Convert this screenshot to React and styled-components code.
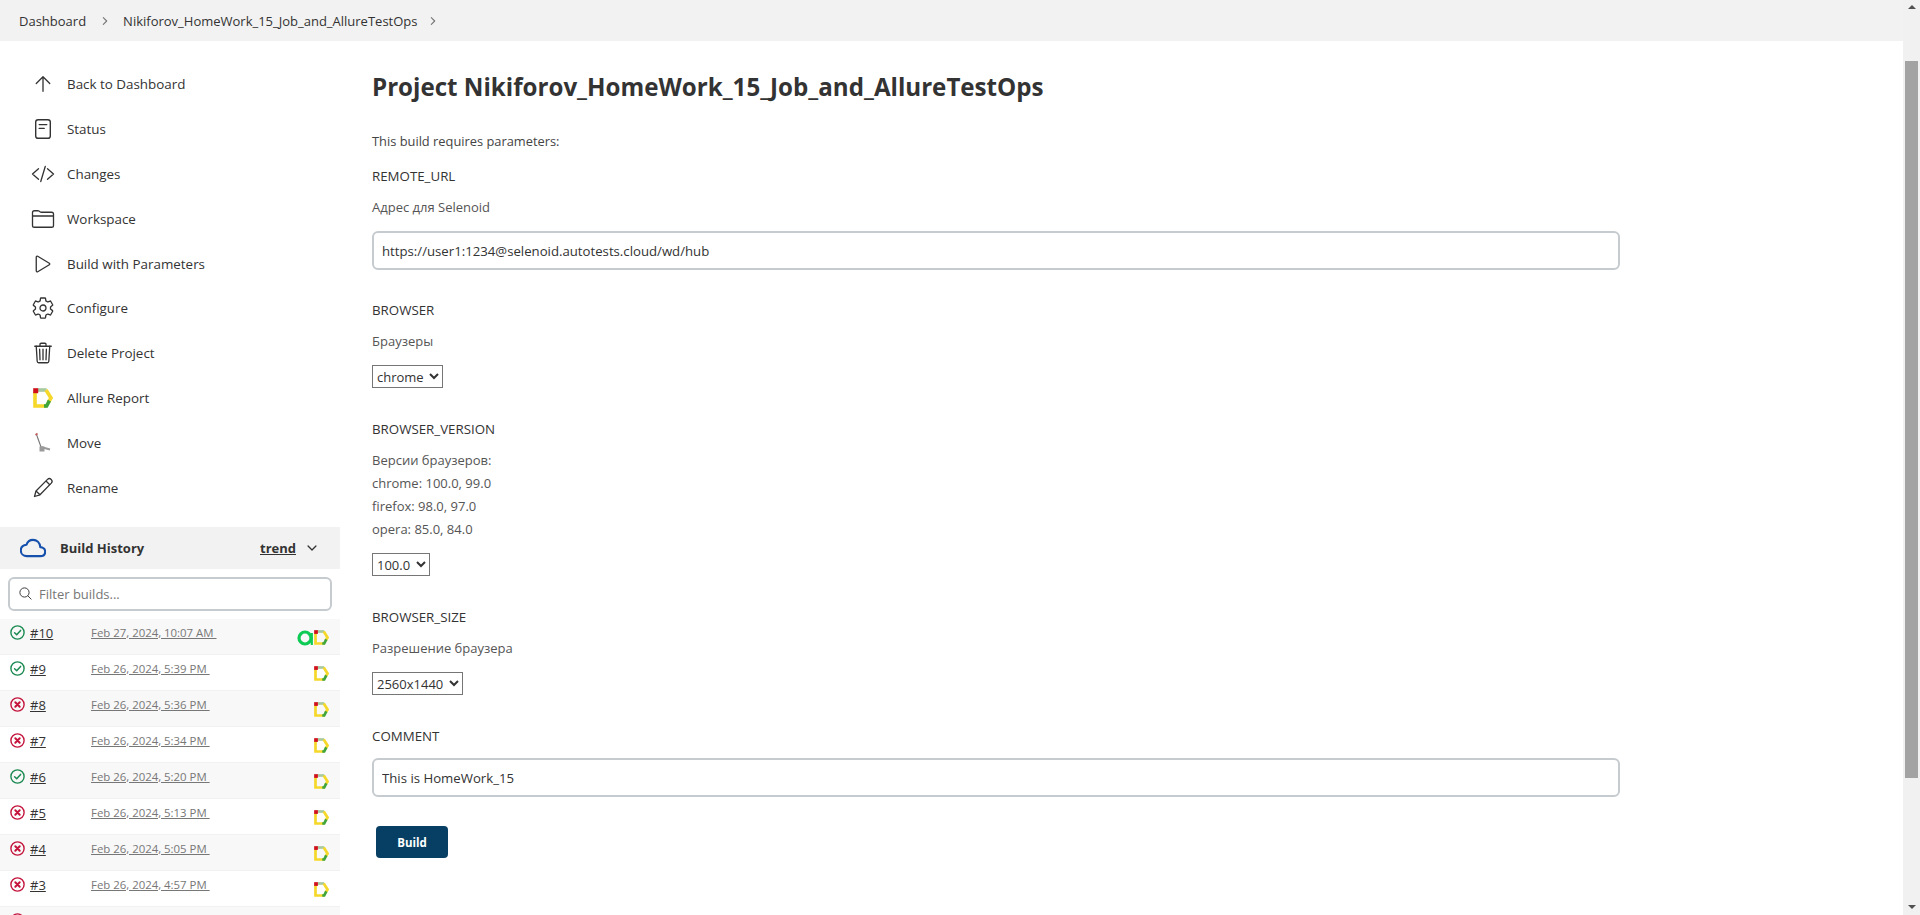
import React from 'react';
import styled, { createGlobalStyle } from 'styled-components';
import {
  IoArrowUpOutline, IoCodeSlashOutline, IoFolderOutline, IoPlayOutline,
  IoSettingsOutline, IoTrashOutline, IoCloudOutline, IoSearchOutline,
  IoChevronDownOutline, IoChevronForwardOutline,
} from 'react-icons/io5';

const FONT = '"Open Sans", "Noto Sans", sans-serif';

const Global = createGlobalStyle`
  html, body { margin: 0; padding: 0; height: 100%; overflow: hidden; background: #fff; }
  body { font-family: ${FONT}; font-size: 13px; color: #333; }
  * { box-sizing: border-box; }
`;

const Shell = styled.div`display: flex; height: 915px; overflow: hidden;`;
const Page = styled.div`flex: 1; min-width: 0; display: flex; flex-direction: column;`;
const Crumbs = styled.nav`height: 41px; flex: none; background: #f2f2f2; display: flex; align-items: center; padding-left: 19px; font-size: 13px; color: #333;`;
const Crumb = styled.span`white-space: nowrap;`;
const CrumbSep = styled.span`display: flex; width: ${p => p.$w}px; justify-content: center; color: #777; font-size: 12px;`;
const Body = styled.div`flex: 1; display: flex; min-height: 0;`;

const Sidebar = styled.aside`width: 340px; flex: none; padding-top: 20.5px;`;
const Tasks = styled.ul`list-style: none; margin: 0 0 16.5px; padding: 0 0 0 31px;`;
const Task = styled.li`height: 44.9px; display: flex; align-items: center; gap: 12px; color: #333; font-size: 13.4px;`;
const TaskIcon = styled.span`
  width: 24px; height: 24px; flex: none; display: flex; align-items: center; justify-content: center; font-size: 24px; color: #333;
  & .ionicon path, & svg[stroke='currentColor'] path { stroke-width: 28px; }
`;

const HistoryHead = styled.div`height: 42px; background: #f2f2f2; display: flex; align-items: center; padding: 0 21px 0 20px; font-weight: 700; font-size: 13px;`;
const CloudIcon = styled.span`display: flex; font-size: 26px; color: #1650ad; margin-right: 14px; & path { stroke-width: 42px; }`;
const Grow = styled.span`flex: 1;`;
const Trend = styled.span`text-decoration: underline; margin-right: 9px;`;
const Chevron = styled.span`display: flex; font-size: 14px;`;
const FilterWrap = styled.div`padding: 8px; height: 50px;`;
const Filter = styled.div`height: 34px; border: 2px solid #c6cbcf; border-radius: 6px; display: flex; align-items: center; padding-left: 8px; gap: 6px; color: #777; font-size: 13px;`;
const SearchIcon = styled.span`display: flex; font-size: 15px; color: #333;`;

const Rows = styled.div`display: flex; flex-direction: column;`;
const Row = styled.div`
  height: 36px; flex: none; display: flex; align-items: flex-start; position: relative; padding: 6px 10px 0;
  background: ${p => (p.$odd ? '#f8f8f8' : '#fff')};
  border-bottom: 1px solid #f1f1f1;
`;
const StatusSlot = styled.span`width: 15px; height: 15px; flex: none; display: flex;`;
const BuildLink = styled.span`width: 66px; padding-left: 5px; flex: none; font-size: 13px; line-height: 16px; text-decoration: underline; color: #333;`;
const BuildDate = styled.span`font-size: 11.4px; line-height: 16px; text-decoration: underline; color: #777; white-space: pre;`;
const Badges = styled.span`margin-left: auto; margin-top: 5px; margin-right: 1px; display: flex; align-items: center;`;

const Main = styled.main`flex: 1; min-width: 0; padding: 30px 0 0 32px;`;
const Title = styled.h1`margin: 0 0 28px; font-size: 24.15px; line-height: 32px; font-weight: 700; color: #333;`;
const Lead = styled.p`margin: 0 0 15px; font-size: 12.85px; line-height: 20px; color: #444;`;
const Field = styled.section`margin-bottom: ${p => p.$gap ?? 31}px;`;
const Label = styled.div`font-size: 13.3px; line-height: 20px; color: #333; margin-bottom: ${p => p.$tight ? 12 : 10}px;`;
const Desc = styled.div`font-size: 13px; line-height: 23px; color: #555; margin-bottom: 12px;`;
const TextInput = styled.input`
  display: block; width: 1248px; height: 39px; border: 2px solid #c6cbcf; border-radius: 6px; padding: 0 8px;
  font: 13.2px ${FONT}; color: #333; background: #fff; outline: none;
`;
const Select = styled.select`
  display: block; height: 23px; font: 13px ${FONT}; color: #333; background: #fff; border: 1px solid #767676; border-radius: 0; padding: 0;
  width: ${p => p.$w}px;
`;
const BuildButton = styled.button`
  display: block; width: 72px; height: 32px; margin-left: 4px; border: 0; border-radius: 4px; background: #063f63; color: #fff;
  font: 700 11.5px ${FONT};
`;

const Scrollbar = styled.div`width: 17px; flex: none; background: #f1f1f1; display: flex; flex-direction: column; align-items: center; padding: 5px 0 6px;`;
const ArrowUp = styled.span`width: 0; height: 0; border-left: 4px solid transparent; border-right: 4px solid transparent; border-bottom: 4px solid #505050;`;
const ArrowDown = styled.span`width: 0; height: 0; margin-top: auto; border-left: 4px solid transparent; border-right: 4px solid transparent; border-top: 4px solid #505050;`;
const Thumb = styled.div`width: 13px; height: 717px; margin-top: 52px; background: #a3a3a3;`;

function AllureIcon({ size = 20 }) {
  return (
    <svg width={size} height={size} viewBox="0 0 20 20" fill="none" strokeWidth="3.6">
      <path d="M5 2H13.6" stroke="#a9c9a0" />
      <path d="M13 2L18 10L15.5 14" stroke="#f5d829" />
      <path d="M2 4V18H13.5" stroke="#f5d829" />
      <path d="M16.4 12.6L13.6 18H11" stroke="#3fa53a" />
      <rect x="0.2" y="0.2" width="5" height="5" fill="#d0101c" />
    </svg>
  );
}

function MoveIcon() {
  return (
    <svg width="20" height="22" viewBox="0 0 20 22" fill="none">
      <path d="M3.5 2.5L8 15" stroke="#777" strokeWidth="1.1" />
      <path d="M2.5 3L4.5 1.5" stroke="#c25a5a" strokeWidth="1.6" />
      <path d="M8 15L17 17.5" stroke="#9a9a9a" strokeWidth="2" />
      <rect x="6.5" y="14.5" width="5" height="5" fill="#9a9a9a" />
    </svg>
  );
}

function StatusDoc() {
  return (
    <svg width="24" height="24" viewBox="0 0 24 24" fill="none" stroke="#333" strokeWidth="1.4" strokeLinecap="round">
      <rect x="4.7" y="2.7" width="14.6" height="18.6" rx="2.4" />
      <path d="M8.2 7.6H15.8M8.2 11.4H13.2" />
    </svg>
  );
}

function PencilIcon() {
  return (
    <svg width="24" height="24" viewBox="0 0 24 24" fill="none" stroke="#333" strokeWidth="1.3" strokeLinejoin="round">
      <path d="M3.5 20.5L5 15L16.5 3.4C17.6 2.3 19.1 2.4 20.2 3.4C21.3 4.5 21.3 6 20.3 7.1L9 18.8Z" />
      <path d="M5 15L9 18.8M15 5L19 9" />
    </svg>
  );
}

function AIcon() {
  return (
    <svg width="17" height="16" viewBox="0 0 17 16" fill="none">
      <circle cx="8" cy="8" r="6" stroke="#0ecb55" strokeWidth="3.2" />
      <path d="M14.8 3V15" stroke="#0ecb55" strokeWidth="2.2" />
    </svg>
  );
}

function StatusIcon({ ok }) {
  const c = ok ? '#1c8a52' : '#c4143c';
  return (
    <svg width="15" height="15" viewBox="0 0 15 15" fill="none">
      <circle cx="7.5" cy="7.5" r="6.6" stroke={c} strokeWidth="1.4" />
      {ok
        ? <path d="M4.6 7.7L6.7 9.7L10.6 5.4" stroke={c} strokeWidth="1.5" strokeLinecap="round" strokeLinejoin="round" />
        : <path d="M5.3 5.3L9.7 9.7M9.7 5.3L5.3 9.7" stroke={c} strokeWidth="2" strokeLinecap="round" />}
    </svg>
  );
}

const tasks = [
  [<IoArrowUpOutline />, 'Back to Dashboard'],
  [<StatusDoc />, 'Status'],
  [<IoCodeSlashOutline />, 'Changes'],
  [<IoFolderOutline />, 'Workspace'],
  [<IoPlayOutline />, 'Build with Parameters'],
  [<IoSettingsOutline />, 'Configure'],
  [<IoTrashOutline />, 'Delete Project'],
  [<AllureIcon />, 'Allure Report'],
  [<MoveIcon />, 'Move'],
  [<PencilIcon />, 'Rename'],
];

const builds = [
  ['#10', 'Feb 27, 2024, 10:07 AM ', true, true],
  ['#9', 'Feb 26, 2024, 5:39 PM ', true],
  ['#8', 'Feb 26, 2024, 5:36 PM ', false],
  ['#7', 'Feb 26, 2024, 5:34 PM ', false],
  ['#6', 'Feb 26, 2024, 5:20 PM ', true],
  ['#5', 'Feb 26, 2024, 5:13 PM ', false],
  ['#4', 'Feb 26, 2024, 5:05 PM ', false],
  ['#3', 'Feb 26, 2024, 4:57 PM ', false],
  ['', '', false],
];

export default function App() {
  return (
    <Shell>
      <Global />
      <Page>
        <Crumbs>
          <Crumb>Dashboard</Crumb>
          <CrumbSep $w={37}><IoChevronForwardOutline /></CrumbSep>
          <Crumb>Nikiforov_HomeWork_15_Job_and_AllureTestOps</Crumb>
          <CrumbSep $w={31}><IoChevronForwardOutline /></CrumbSep>
        </Crumbs>
        <Body>
          <Sidebar>
            <Tasks>
              {tasks.map(([icon, text]) => (
                <Task key={text}><TaskIcon>{icon}</TaskIcon>{text}</Task>
              ))}
            </Tasks>
            <HistoryHead>
              <CloudIcon><IoCloudOutline /></CloudIcon>
              Build History
              <Grow />
              <Trend>trend</Trend>
              <Chevron><IoChevronDownOutline /></Chevron>
            </HistoryHead>
            <FilterWrap>
              <Filter><SearchIcon><IoSearchOutline /></SearchIcon>Filter builds...</Filter>
            </FilterWrap>
            <Rows>
              {builds.map(([id, date, ok, a], i) => (
                <Row key={i} $odd={i % 2 === 0}>
                  <StatusSlot><StatusIcon ok={ok} /></StatusSlot>
                  {id && <BuildLink>{id}</BuildLink>}
                  {id && <BuildDate>{date}</BuildDate>}
                  {id && (
                    <Badges>
                      {a && <AIcon />}
                      <AllureIcon size={15} />
                    </Badges>
                  )}
                </Row>
              ))}
            </Rows>
          </Sidebar>
          <Main>
            <Title>Project Nikiforov_HomeWork_15_Job_and_AllureTestOps</Title>
            <Lead>This build requires parameters:</Lead>
            <Field $gap={30}>
              <Label>REMOTE_URL</Label>
              <Desc>Адрес для Selenoid</Desc>
              <TextInput readOnly value="https://user1:1234@selenoid.autotests.cloud/wd/hub" />
            </Field>
            <Field>
              <Label>BROWSER</Label>
              <Desc>Браузеры</Desc>
              <Select $w={71} defaultValue="chrome"><option>chrome</option></Select>
            </Field>
            <Field>
              <Label>BROWSER_VERSION</Label>
              <Desc>Версии браузеров:<br />chrome: 100.0, 99.0<br />firefox: 98.0, 97.0<br />opera: 85.0, 84.0</Desc>
              <Select $w={58} defaultValue="100.0"><option>100.0</option></Select>
            </Field>
            <Field>
              <Label>BROWSER_SIZE</Label>
              <Desc>Разрешение браузера</Desc>
              <Select $w={91} defaultValue="2560x1440"><option>2560x1440</option></Select>
            </Field>
            <Field $gap={29}>
              <Label $tight>COMMENT</Label>
              <TextInput readOnly value="This is HomeWork_15" />
            </Field>
            <BuildButton>Build</BuildButton>
          </Main>
        </Body>
      </Page>
      <Scrollbar>
        <ArrowUp />
        <Thumb />
        <ArrowDown />
      </Scrollbar>
    </Shell>
  );
}
